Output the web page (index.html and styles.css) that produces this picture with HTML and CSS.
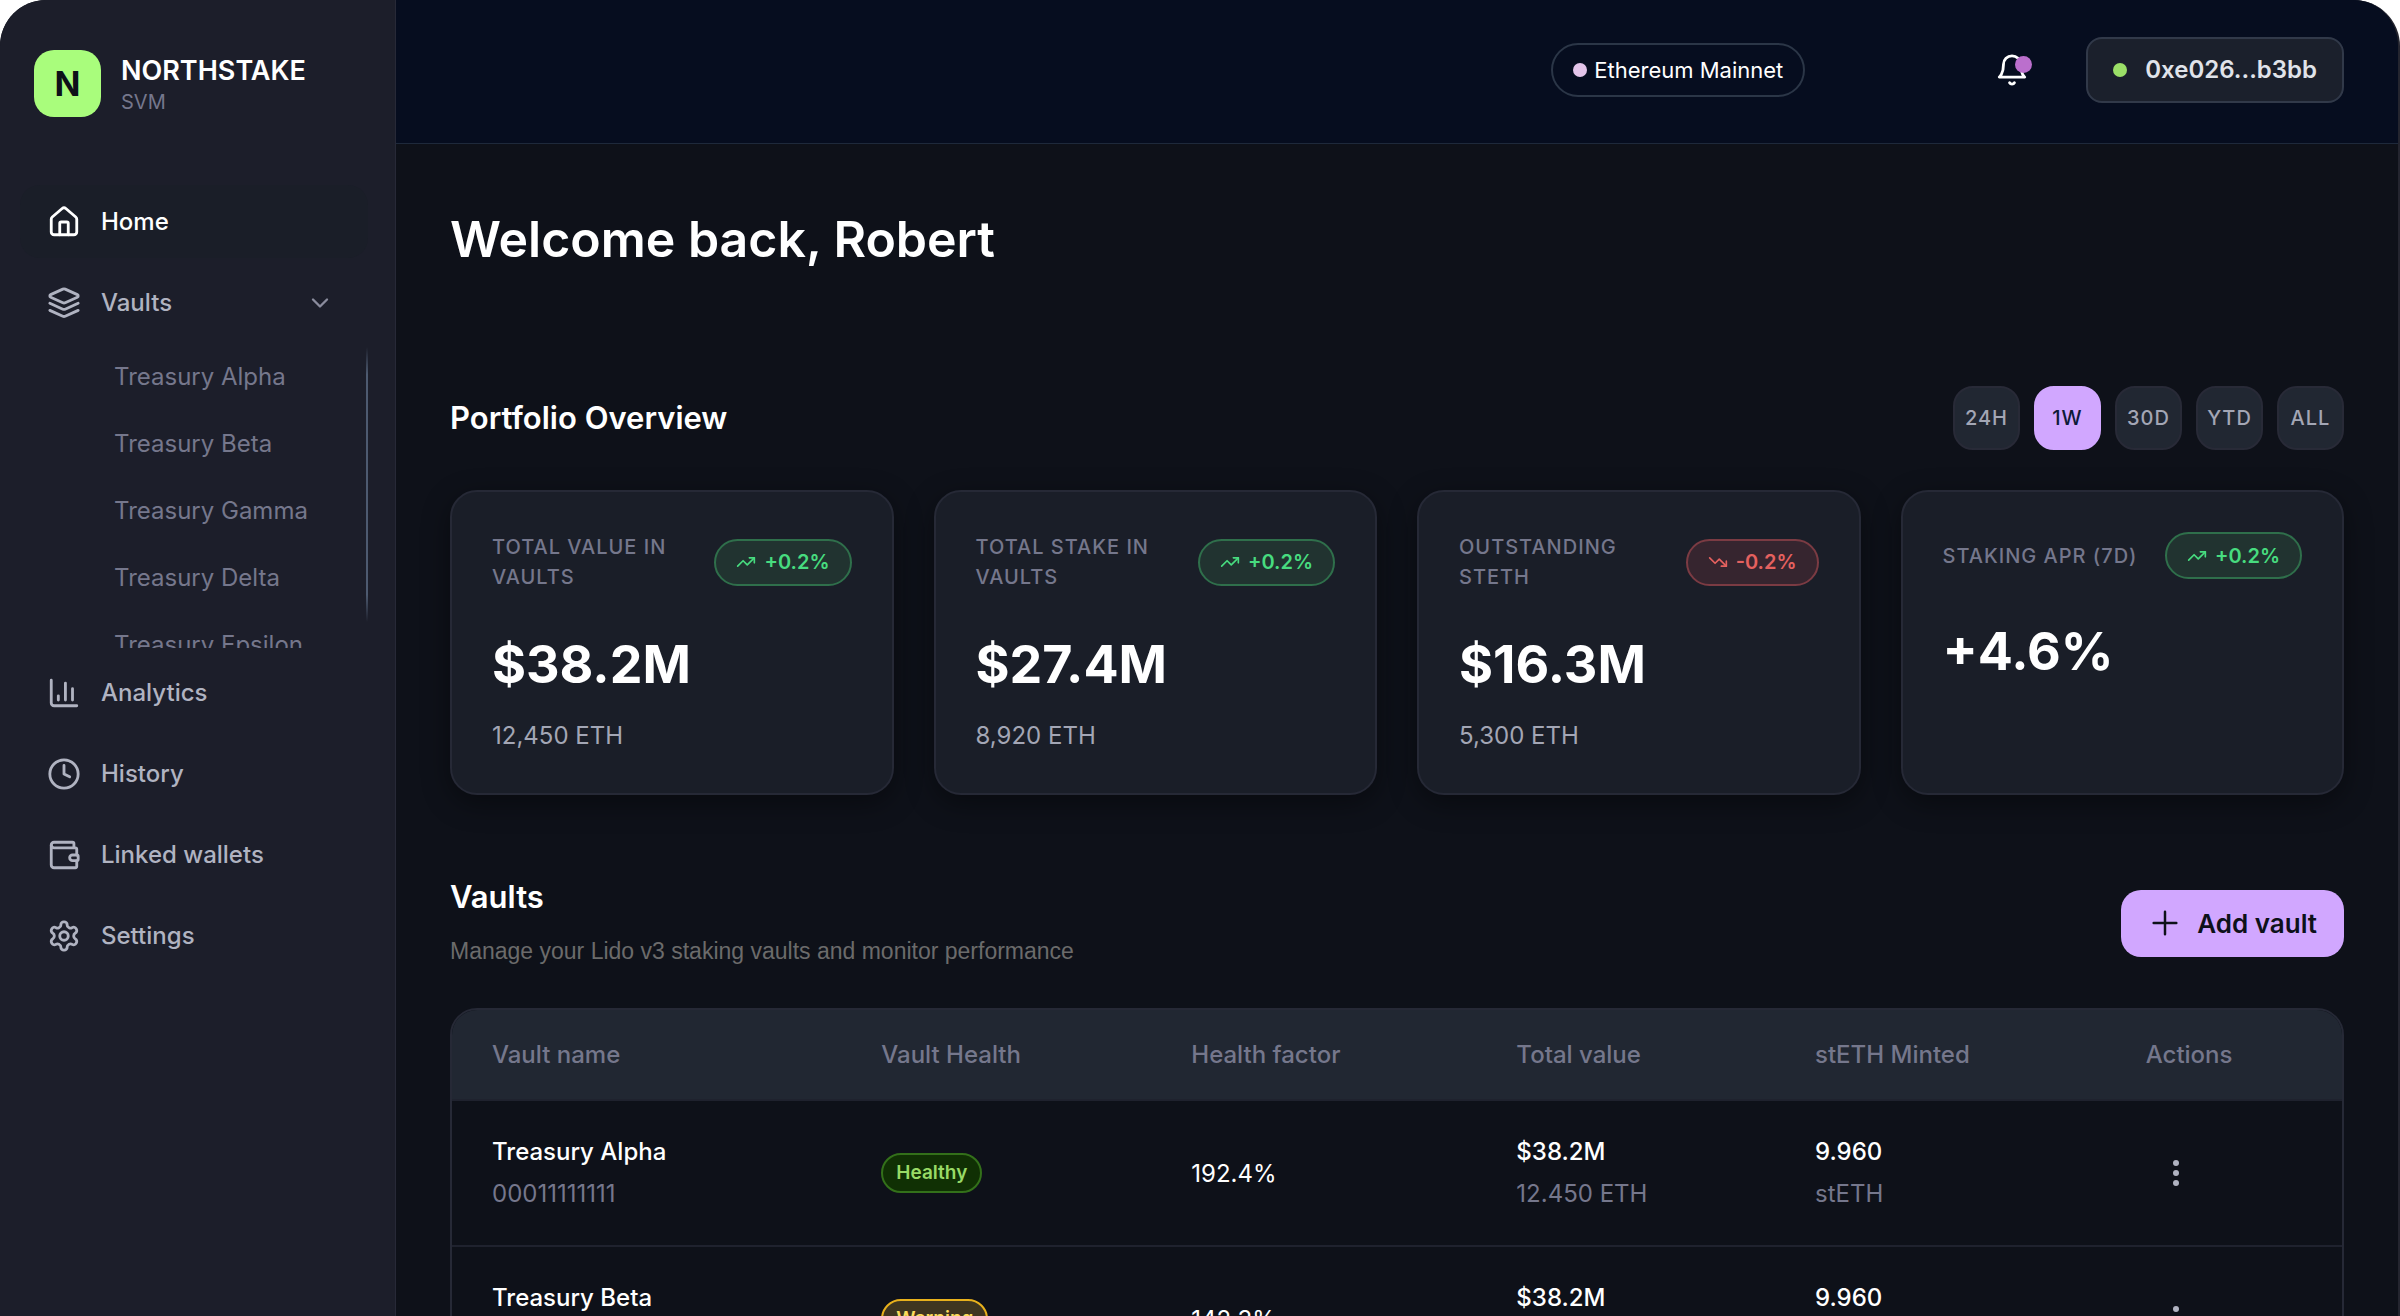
FILE: index.html
```
<!DOCTYPE html>
<html lang="en">
<head>
    <meta charset="UTF-8">
    <title>Northstake SVM</title>
    <link rel="stylesheet" href="styles.css">
</head>
<body>
<!-- shared trend arrows -->
<svg class="sprite" aria-hidden="true">
    <symbol id="trend-up" viewBox="0 0 24 24">
        <polyline points="22 7 13.5 15.5 8.5 10.5 2 17"/>
        <polyline points="16 7 22 7 22 13"/>
    </symbol>
    <symbol id="trend-down" viewBox="0 0 24 24">
        <polyline points="22 17 13.5 8.5 8.5 13.5 2 7"/>
        <polyline points="16 17 22 17 22 11"/>
    </symbol>
</svg>
<div class="app">
    <aside class="sidebar">
        <div class="brand">
            <div class="logo">N</div>
            <div class="brand-text">
                <div class="brand-name">NORTHSTAKE</div>
                <div class="brand-sub">SVM</div>
            </div>
        </div>
        <nav class="nav">
            <a href="#" class="nav-item active">
                <svg class="icon" viewBox="0 0 24 24"><path d="M15 21v-8a1 1 0 0 0-1-1h-4a1 1 0 0 0-1 1v8"/><path d="M3 10a2 2 0 0 1 .709-1.528l7-5.999a2 2 0 0 1 2.582 0l7 5.999A2 2 0 0 1 21 10v9a2 2 0 0 1-2 2H5a2 2 0 0 1-2-2z"/></svg>
                Home
            </a>
            <a href="#" class="nav-item">
                <svg class="icon" viewBox="0 0 24 24"><path d="m12.83 2.18a2 2 0 0 0-1.66 0L2.6 6.08a1 1 0 0 0 0 1.83l8.58 3.91a2 2 0 0 0 1.66 0l8.58-3.9a1 1 0 0 0 0-1.83Z"/><path d="m22 12.2-9.17 4.16a2 2 0 0 1-1.66 0L2 12.2"/><path d="m22 17.2-9.17 4.16a2 2 0 0 1-1.66 0L2 17.2"/></svg>
                Vaults
                <svg class="chevron" viewBox="0 0 24 24"><path d="m6 9 6 6 6-6"/></svg>
            </a>
            <div class="subnav">
                <div class="subnav-list">
                    <a href="#">Treasury Alpha</a>
                    <a href="#">Treasury Beta</a>
                    <a href="#">Treasury Gamma</a>
                    <a href="#">Treasury Delta</a>
                    <a href="#">Treasury Epsilon</a>
                </div>
                <div class="subnav-track"></div>
            </div>
            <a href="#" class="nav-item">
                <svg class="icon" viewBox="0 0 24 24"><path d="M3 3v16a2 2 0 0 0 2 2h16"/><path d="M18 17V9"/><path d="M13 17V5"/><path d="M8 17v-3"/></svg>
                Analytics
            </a>
            <a href="#" class="nav-item">
                <svg class="icon" viewBox="0 0 24 24"><circle cx="12" cy="12" r="10"/><path d="M12 6v6l4 2"/></svg>
                History
            </a>
            <a href="#" class="nav-item">
                <svg class="icon" viewBox="0 0 24 24"><path d="M19 7V4a1 1 0 0 0-1-1H5a2 2 0 0 0 0 4h15a1 1 0 0 1 1 1v4"/><path d="M3 5v14a2 2 0 0 0 2 2h15a1 1 0 0 0 1-1v-4"/><path d="M18 12h3a1 1 0 0 1 1 1v2a1 1 0 0 1-1 1h-3a2 2 0 0 1 0-4z"/></svg>
                Linked wallets
            </a>
            <a href="#" class="nav-item">
                <svg class="icon" viewBox="0 0 24 24"><path d="M12.22 2h-.44a2 2 0 0 0-2 2v.18a2 2 0 0 1-1 1.73l-.43.25a2 2 0 0 1-2 0l-.15-.08a2 2 0 0 0-2.73.73l-.22.38a2 2 0 0 0 .73 2.73l.15.1a2 2 0 0 1 1 1.72v.51a2 2 0 0 1-1 1.74l-.15.09a2 2 0 0 0-.73 2.73l.22.38a2 2 0 0 0 2.73.73l.15-.08a2 2 0 0 1 2 0l.43.25a2 2 0 0 1 1 1.73V20a2 2 0 0 0 2 2h.44a2 2 0 0 0 2-2v-.18a2 2 0 0 1 1-1.73l.43-.25a2 2 0 0 1 2 0l.15.08a2 2 0 0 0 2.73-.73l.22-.39a2 2 0 0 0-.73-2.73l-.15-.08a2 2 0 0 1-1-1.74v-.5a2 2 0 0 1 1-1.74l.15-.09a2 2 0 0 0 .73-2.73l-.22-.38a2 2 0 0 0-2.73-.73l-.15.08a2 2 0 0 1-2 0l-.43-.25a2 2 0 0 1-1-1.73V4a2 2 0 0 0-2-2z"/><circle cx="12" cy="12" r="3"/></svg>
                Settings
            </a>
        </nav>
    </aside>

    <div class="page">
        <header class="topbar">
            <div class="network"><span class="dot pink"></span>Ethereum Mainnet</div>
            <button type="button" class="bell" aria-label="Notifications">
                <svg viewBox="0 0 24 24"><path d="M6 8a6 6 0 0 1 12 0c0 7 3 9 3 9H3s3-2 3-9"/><path d="M10.3 21a1.94 1.94 0 0 0 3.4 0"/></svg>
                <span class="bell-dot"></span>
            </button>
            <button type="button" class="wallet"><span class="dot green"></span>0xe026...b3bb</button>
        </header>

        <main class="content">
            <h1>Welcome back, Robert</h1>

            <div class="section-head">
                <h2>Portfolio Overview</h2>
                <div class="ranges">
                    <button type="button">24H</button>
                    <button type="button" class="selected">1W</button>
                    <button type="button">30D</button>
                    <button type="button">YTD</button>
                    <button type="button">ALL</button>
                </div>
            </div>

            <div class="cards">
                <div class="card">
                    <div class="card-head">
                        <div class="card-label">Total value in vaults</div>
                        <div class="trend up"><svg><use href="#trend-up"/></svg>+0.2%</div>
                    </div>
                    <div class="card-value">$38.2M</div>
                    <div class="card-sub">12,450 ETH</div>
                </div>
                <div class="card">
                    <div class="card-head">
                        <div class="card-label">Total stake in vaults</div>
                        <div class="trend up"><svg><use href="#trend-up"/></svg>+0.2%</div>
                    </div>
                    <div class="card-value">$27.4M</div>
                    <div class="card-sub">8,920 ETH</div>
                </div>
                <div class="card">
                    <div class="card-head">
                        <div class="card-label">Outstanding stETH</div>
                        <div class="trend down"><svg><use href="#trend-down"/></svg>-0.2%</div>
                    </div>
                    <div class="card-value">$16.3M</div>
                    <div class="card-sub">5,300 ETH</div>
                </div>
                <div class="card">
                    <div class="card-head">
                        <div class="card-label wide">Staking APR (7d)</div>
                        <div class="trend up"><svg><use href="#trend-up"/></svg>+0.2%</div>
                    </div>
                    <div class="card-value">+4.6%</div>
                </div>
            </div>

            <div class="section-head vaults-head">
                <div>
                    <h2>Vaults</h2>
                    <p>Manage your Lido v3 staking vaults and monitor performance</p>
                </div>
                <button type="button" class="add">
                    <svg viewBox="0 0 24 24"><path d="M4 12h16M12 4v16"/></svg>
                    Add vault
                </button>
            </div>

            <div class="table-wrap">
                <table>
                    <colgroup>
                        <col class="c-name"><col class="c-health"><col class="c-factor"><col class="c-value"><col class="c-minted"><col>
                    </colgroup>
                    <thead>
                        <tr>
                            <th>Vault name</th>
                            <th>Vault Health</th>
                            <th>Health factor</th>
                            <th>Total value</th>
                            <th>stETH Minted</th>
                            <th>Actions</th>
                        </tr>
                    </thead>
                    <tbody>
                        <tr>
                            <td><div class="main">Treasury Alpha</div><div class="sub">00011111111</div></td>
                            <td><span class="badge healthy">Healthy</span></td>
                            <td>192.4%</td>
                            <td><div class="main">$38.2M</div><div class="sub">12.450 ETH</div></td>
                            <td><div class="main">9.960</div><div class="sub">stETH</div></td>
                            <td><button type="button" class="more" aria-label="Actions for Treasury Alpha"><svg viewBox="0 0 6 26"><circle cx="3" cy="3" r="3"/><circle cx="3" cy="13" r="3"/><circle cx="3" cy="23" r="3"/></svg></button></td>
                        </tr>
                        <tr>
                            <td><div class="main">Treasury Beta</div><div class="sub">00011111111</div></td>
                            <td><span class="badge warning">Warning</span></td>
                            <td>142.3%</td>
                            <td><div class="main">$38.2M</div><div class="sub">12.450 ETH</div></td>
                            <td><div class="main">9.960</div><div class="sub">stETH</div></td>
                            <td><button type="button" class="more" aria-label="Actions for Treasury Beta"><svg viewBox="0 0 6 26"><circle cx="3" cy="3" r="3"/><circle cx="3" cy="13" r="3"/><circle cx="3" cy="23" r="3"/></svg></button></td>
                        </tr>
                    </tbody>
                </table>
            </div>
        </main>
    </div>
</div>
</body>
</html>
```
FILE: styles.css
```
* {
    box-sizing: border-box;
}
body {
    margin: 0;
    height: 100vh;
    overflow: hidden;
    background: white;
    color: white;
    font-family: Inter, "Liberation Sans", sans-serif;
    font-size: 24px;
}
h1, h2, p {
    margin: 0;
}
a {
    color: inherit;
    text-decoration: none;
}
button {
    margin: 0;
    padding: 0;
    border: none;
    background: none;
    color: inherit;
    font-family: inherit;
    cursor: pointer;
}
svg {
    flex: none;
    fill: none;
    stroke: currentColor;
    stroke-width: 2;
    stroke-linecap: round;
    stroke-linejoin: round;
}
.sprite {
    display: none;
}
.app {
    display: flex;
    height: 100vh;
    overflow: hidden;
    background: #0e1119;
    border-right: 2px solid #24252f;
    border-radius: 46px 46px 0 0;
}

/* sidebar */
.sidebar {
    flex: none;
    width: 396px;
    background: #1c1e2a;
    border-right: 1px solid #272937;
}
.brand {
    display: flex;
    align-items: center;
    gap: 20px;
    padding: 50px 34px 68px;
}
.logo {
    width: 67px;
    height: 67px;
    border-radius: 20px;
    background: #a9fd7c;
    color: #0e1119;
    font-size: 34px;
    font-weight: 700;
    line-height: 67px;
    text-align: center;
}
.brand-text {
    padding-top: 4px;
}
.brand-name {
    font-size: 27px;
    font-weight: 600;
    line-height: 34px;
}
.brand-sub {
    color: #75778c;
    font-size: 20px;
    line-height: 29px;
}
.nav {
    display: flex;
    flex-direction: column;
    gap: 8px;
    padding: 0 27px 0 20px;
}
.nav-item {
    display: flex;
    align-items: center;
    gap: 20px;
    height: 73px;
    padding: 0 34px 0 27px;
    border-radius: 20px;
    color: #b0b3c1;
    font-weight: 500;
}
.nav-item.active {
    background: #1a1e28;
    color: white;
}
.icon {
    width: 34px;
    height: 34px;
}
.chevron {
    width: 28px;
    height: 28px;
    margin-left: auto;
    color: #8a8c9d;
}
.subnav {
    display: flex;
    justify-content: space-between;
    height: 301px;
    overflow: hidden;
}
.subnav-list {
    display: flex;
    flex-direction: column;
    gap: 8px;
    padding-left: 94px;
    color: #75778c;
    line-height: 59px;
}
.subnav-track {
    width: 2px;
    height: 275px;
    background: linear-gradient(transparent, #4d5a70 10%, #4d5a70 90%, transparent);
}

/* top bar */
.page {
    flex: 1;
    min-width: 0;
}
.topbar {
    display: flex;
    align-items: center;
    justify-content: flex-end;
    height: 144px;
    padding: 0 54px 4px;
    background: #060d1f;
    border-bottom: 1px solid #1e293b;
}
.network {
    display: flex;
    align-items: center;
    gap: 7px;
    height: 54px;
    padding: 0 20px;
    border: 2px solid #2b3647;
    border-radius: 27px;
    font-size: 22px;
}
.dot {
    width: 14px;
    height: 14px;
    border-radius: 50%;
}
.dot.pink {
    background: #e3c4ea;
}
.dot.green {
    background: #9bdf68;
}
.bell {
    position: relative;
    margin: 0 57px 0 190px;
    width: 34px;
    height: 34px;
}
.bell svg {
    display: block;
    width: 34px;
    height: 34px;
}
.bell-dot {
    position: absolute;
    top: 3px;
    right: -3px;
    width: 17px;
    height: 17px;
    border-radius: 50%;
    background: #bb6fcd;
}
.wallet {
    display: flex;
    align-items: center;
    gap: 18px;
    height: 66px;
    padding: 0 25px;
    background: #1b202c;
    border: 2px solid #313949;
    border-radius: 16px;
    color: #e0e3ea;
    font-size: 24px;
    font-weight: 600;
}

/* content */
.content {
    padding: 64px 54px 0;
}
h1 {
    font-size: 50px;
    font-weight: 600;
    line-height: 62px;
}
h2 {
    font-size: 31px;
    font-weight: 600;
    line-height: 40px;
}
.section-head {
    display: flex;
    align-items: center;
    justify-content: space-between;
}
h1 + .section-head {
    margin-top: 116px;
}
.ranges {
    display: flex;
    gap: 14px;
}
.ranges button {
    width: 67px;
    height: 64px;
    background: #212732;
    border: 2px solid #282a37;
    border-radius: 20px;
    color: #a3a6b5;
    font-size: 20px;
    font-weight: 500;
    letter-spacing: 1px;
}
.ranges button.selected {
    background: #d1a7ff;
    border-color: #d1a7ff;
    color: #0e1a38;
}
.cards {
    display: grid;
    grid-template-columns: repeat(4, 1fr);
    gap: 40px;
    margin-top: 40px;
}
.card {
    padding: 40px 40px 39px;
    background: #1a1e28;
    border: 2px solid #262936;
    border-radius: 27px;
    box-shadow: 0 8px 28px rgba(0, 0, 0, .4);
}
.card-head {
    display: flex;
    align-items: center;
    justify-content: space-between;
}
.card-label {
    max-width: 200px;
    color: #75778c;
    font-size: 20px;
    font-weight: 500;
    letter-spacing: 1px;
    line-height: 30px;
    text-transform: uppercase;
}
.card-label.wide {
    max-width: none;
}
.trend {
    display: flex;
    flex: none;
    align-items: center;
    gap: 8px;
    height: 47px;
    padding: 0 20px;
    border: 2px solid;
    border-radius: 24px;
    font-size: 20px;
    font-weight: 600;
}
.trend svg {
    width: 20px;
    height: 20px;
}
.trend.up {
    background: #213330;
    border-color: #2f6f4b;
    color: #47dc7f;
}
.trend.down {
    background: #36252f;
    border-color: #7b3b43;
    color: #e5615f;
}
.card-value {
    margin-top: 37px;
    font-size: 52px;
    font-weight: 700;
    line-height: 72px;
}
.card-sub {
    margin-top: 17px;
    color: #a3a6b5;
    line-height: 36px;
}

/* vaults */
.vaults-head {
    margin-top: 82px;
}
.vaults-head p {
    margin-top: 16px;
    color: #6b6b6b;
    font-family: "Liberation Sans", sans-serif;
    font-size: 23px;
    line-height: 36px;
}
.add {
    display: flex;
    align-items: center;
    gap: 15px;
    height: 67px;
    padding: 0 27px;
    background: #d1a7ff;
    border-radius: 20px;
    color: #0e1119;
    font-size: 26px;
    font-weight: 600;
}
.add svg {
    width: 34px;
    height: 34px;
    stroke-width: 1.75;
}
.table-wrap {
    margin-top: 39px;
    overflow: hidden;
    border: 2px solid #262936;
    border-radius: 27px;
}
table {
    width: 100%;
    table-layout: fixed;
    border-collapse: collapse;
}
.c-name {
    width: 20.6%;
}
.c-health {
    width: 16.4%;
}
.c-factor {
    width: 17.2%;
}
.c-value {
    width: 15.8%;
}
.c-minted {
    width: 17.5%;
}
th, td {
    padding: 0 0 0 40px;
    text-align: left;
    border-bottom: 2px solid #1f222e;
}
th {
    height: 90px;
    background: #212732;
    color: #75778c;
    font-weight: 500;
}
td {
    height: 146px;
}
.main {
    font-weight: 500;
    line-height: 42px;
}
.sub {
    color: #75778c;
    line-height: 42px;
}
.badge {
    display: inline-block;
    padding: 0 13px;
    border: 2px solid;
    border-radius: 20px;
    font-size: 19px;
    font-weight: 600;
    line-height: 36px;
    vertical-align: middle;
}
.badge.healthy {
    background: #103004;
    border-color: #33701a;
    color: #98da66;
}
.badge.warning {
    background: #3f3620;
    border-color: #e8b11c;
    color: #fbdc5c;
}
.more {
    display: flex;
    align-items: center;
    justify-content: center;
    width: 60px;
    height: 60px;
    color: #b0b3c1;
}
.more svg {
    width: 6px;
    height: 26px;
    fill: currentColor;
    stroke: none;
}
```
